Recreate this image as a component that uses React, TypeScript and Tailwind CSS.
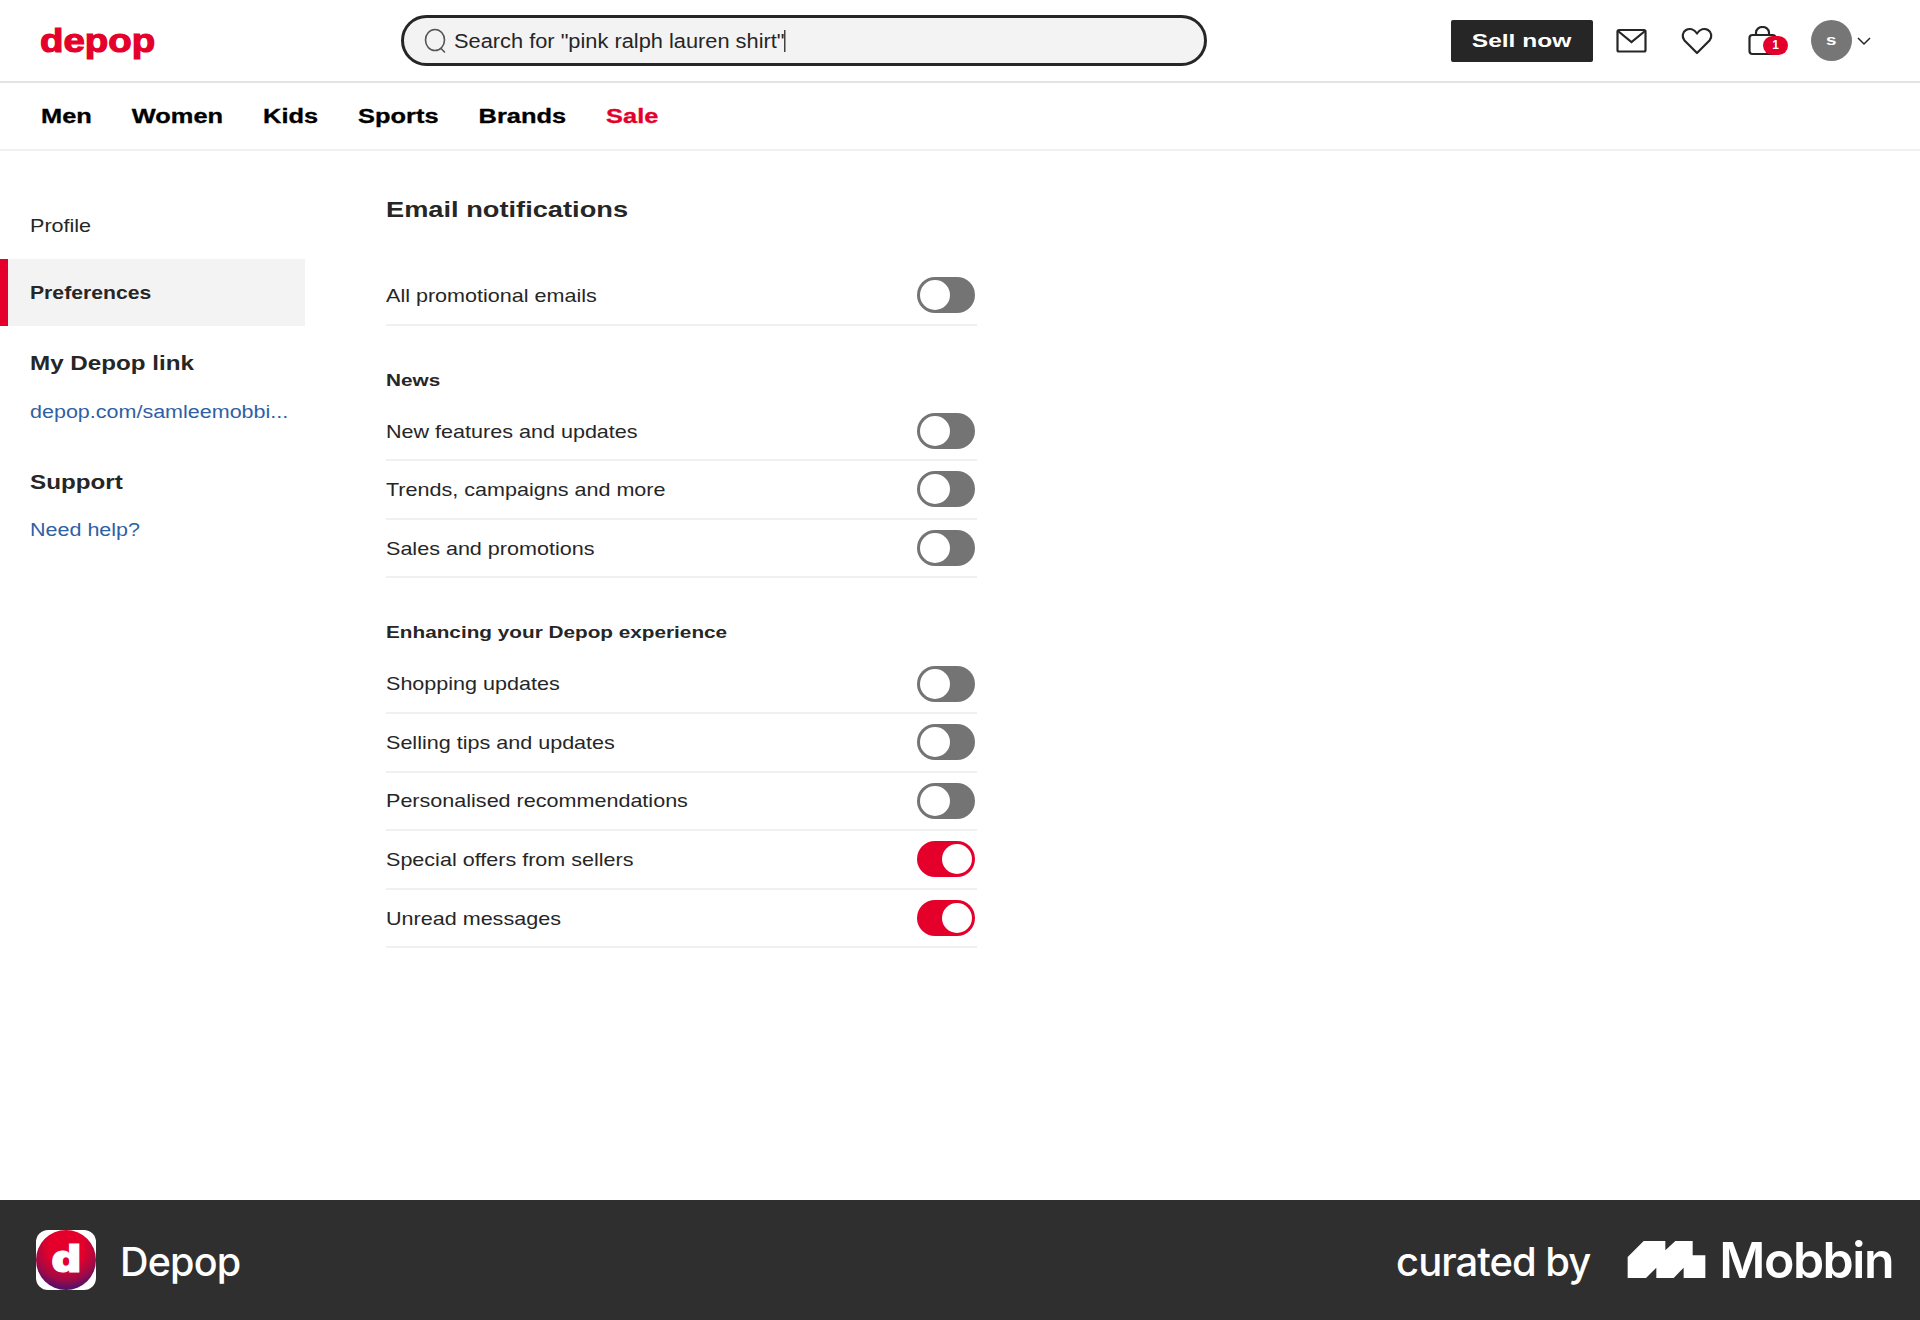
import type { ReactNode } from "react";

const sans = "font-['Liberation_Sans',Arial,sans-serif]";

const news = ["New features and updates", "Trends, campaigns and more", "Sales and promotions"];
const experience = [
  { label: "Shopping updates", on: false },
  { label: "Selling tips and updates", on: false },
  { label: "Personalised recommendations", on: false },
  { label: "Special offers from sellers", on: true },
  { label: "Unread messages", on: true },
];
const navItems = ["Men", "Women", "Kids", "Sports", "Brands"];

// the real page uses an extended grotesque, so stretch Liberation sideways
function Wide({ children, className = "" }: { children: ReactNode; className?: string }) {
  return <span className={`inline-block origin-left whitespace-nowrap ${className}`}>{children}</span>;
}

function Toggle({ on }: { on: boolean }) {
  return (
    <span
      className={`flex h-[36px] w-[58px] items-center rounded-full p-[3px] ${on ? "justify-end bg-[#e4002b]" : "justify-start bg-[#747474]"}`}
    >
      <span className="h-[30px] w-[30px] rounded-full bg-white" />
    </span>
  );
}

function Row({ label, on = false }: { label: string; on?: boolean }) {
  return (
    <div className="flex h-[58.6px] items-center justify-between border-b-2 border-[#f0f0f0] pr-[2px]">
      <Wide className="scale-x-[1.165] pt-px text-[18.5px] text-[#262626]">{label}</Wide>
      <Toggle on={on} />
    </div>
  );
}

function Header() {
  return (
    <header className="flex h-[83px] items-center border-b-2 border-[#e3e3e3] pl-[40px]">
      <span className="w-[361px]">
        <Wide className="scale-x-[1.13] text-[34px] leading-none font-bold text-[#e4002b] [-webkit-text-stroke:1.2px_#e4002b]">
          depop
        </Wide>
      </span>
      <div className="flex h-[51px] w-[806px] items-center rounded-[26px] border-[3px] border-[#262626] bg-[#f3f3f3] pl-[19px]">
        <svg className="h-[26px] w-[26px] text-[#555]" viewBox="0 0 26 26" fill="none" stroke="currentColor" strokeWidth="1.6">
          <ellipse cx="12" cy="12" rx="9.5" ry="10.5" />
          <path d="M18 20.5l3.5 3.5" strokeLinecap="round" />
        </svg>
        <Wide className="ml-[5px] scale-x-[1.09] border-r border-black text-[20px] leading-[22px] text-[#262626]">
          Search for "pink ralph lauren shirt"
        </Wide>
      </div>
      <button className="ml-[244px] flex h-[42px] w-[142px] items-center justify-center rounded-[2px] bg-[#262626] pt-px text-[19px] font-bold text-white">
        <span className="inline-block scale-x-[1.29] whitespace-nowrap">Sell now</span>
      </button>
      <svg className="ml-[23px] h-[26px] w-[32px] text-[#262626]" viewBox="0 0 32 26" fill="none" stroke="currentColor" strokeWidth="2.2">
        <rect x="1.5" y="2" width="28" height="21.5" rx="1.5" />
        <path d="M2 3l13.5 11L29 3" />
      </svg>
      <svg className="ml-[33px] h-[28px] w-[32px] text-[#262626]" viewBox="0 0 32 28" fill="none" stroke="currentColor" strokeWidth="2.2" strokeLinejoin="round">
        <path d="M16 26L3.5 13.5C0.5 10 1.5 5 5 3c3.5-2 8-1 11 3.500C19 2 23.500 1 27 3c3.500 2 4.500 7 1.500 10.500L16 26z" />
      </svg>
      <span className="relative ml-[35px] block h-[30px] w-[40px]">
        <svg className="h-[30px] w-[40px] text-[#262626]" viewBox="0 0 40 30" fill="none" stroke="currentColor" strokeWidth="2.2">
          <rect x="1.500" y="9" width="26" height="19" rx="3" />
          <path d="M8 9V6.500a6.500 5.500 0 0113 0V9" />
        </svg>
        <span className="absolute top-[10px] left-[15px] flex h-[19px] w-[25px] items-center justify-center rounded-full bg-[#e4002b] text-[12px] font-bold text-white">
          1
        </span>
      </span>
      <span className="ml-[23px] flex h-[41px] w-[41px] items-center justify-center rounded-full bg-[#767676] text-[15px] font-bold text-white">
        <span className="inline-block scale-x-[1.25]">s</span>
      </span>
      <svg className="ml-[5px] h-[10px] w-[14px] text-[#262626]" viewBox="0 0 14 10" fill="none" stroke="currentColor" strokeWidth="1.5">
        <path d="M1 2l6 6 6-6" />
      </svg>
    </header>
  );
}

function Nav() {
  return (
    <nav className="flex h-[68px] items-center border-b-2 border-[#f0f0f0] pl-[41px]">
      <div className="flex origin-left scale-x-[1.27] items-center gap-[31.5px] text-[20px] font-bold text-black [-webkit-text-stroke:0.3px_currentColor]">
        {navItems.map((item) => (
          <a key={item}>{item}</a>
        ))}
        <a className="text-[#e4002b]">Sale</a>
      </div>
    </nav>
  );
}

function Sidebar() {
  return (
    <aside className="w-[305px] shrink-0 pt-[41px] text-[#262626]">
      <div className="flex h-[67px] items-center pl-[30px]">
        <Wide className="scale-x-[1.165] pt-px text-[18.5px]">Profile</Wide>
      </div>
      <div className="flex h-[67px] items-center border-l-[8px] border-[#e4002b] bg-[#f3f3f3] pl-[22px]">
        <Wide className="scale-x-[1.21] pt-[2px] text-[17.5px] font-bold">Preferences</Wide>
      </div>
      <h3 className="mt-[24px] pl-[30px] text-[20px] leading-[26px] font-bold">
        <Wide className="scale-x-[1.21]">My Depop link</Wide>
      </h3>
      <a className="mt-[24px] block pl-[30px] text-[18px] leading-[24px] text-[#2f5fa5]">
        <Wide className="scale-x-[1.195]">depop.com/samleemobbi...</Wide>
      </a>
      <h3 className="mt-[45px] pl-[30px] text-[20px] leading-[26px] font-bold">
        <Wide className="scale-x-[1.21]">Support</Wide>
      </h3>
      <a className="mt-[23px] block pl-[30px] text-[18px] leading-[24px] text-[#2f5fa5]">
        <Wide className="scale-x-[1.195]">Need help?</Wide>
      </a>
    </aside>
  );
}

function Settings() {
  return (
    <section className="ml-[81px] w-[591px] pt-[41px]">
      <h1 className="text-[22.5px] leading-[36px] font-bold text-[#262626]">
        <Wide className="scale-x-[1.21]">Email notifications</Wide>
      </h1>
      <div className="mt-[39px]">
        <Row label="All promotional emails" />
      </div>
      <h2 className="mt-[43px] text-[17px] leading-[24px] font-bold text-[#262626]">
        <Wide className="scale-x-[1.22]">News</Wide>
      </h2>
      <div className="mt-[10px]">
        {news.map((label) => (
          <Row key={label} label={label} />
        ))}
      </div>
      <h2 className="mt-[43px] text-[17px] leading-[24px] font-bold text-[#262626]">
        <Wide className="scale-x-[1.22]">Enhancing your Depop experience</Wide>
      </h2>
      <div className="mt-[10px]">
        {experience.map((item) => (
          <Row key={item.label} label={item.label} on={item.on} />
        ))}
      </div>
    </section>
  );
}

function Footer() {
  return (
    <footer className="flex h-[120px] items-center justify-between bg-[#2f2f2f] pr-[27px] pl-[36px] font-['Inter',sans-serif] text-white">
      <div className="flex items-center">
        <span className="flex h-[60px] w-[60px] items-center justify-center rounded-[12px] bg-white">
          <span className="flex h-[60px] w-[60px] items-center justify-center rounded-full bg-[radial-gradient(circle_at_50%_30%,#e4002b_35%,#a00a45_62%,#4a1070_82%)] text-[38px] leading-none font-black text-white">
            <span className="-mt-[5px] inline-block scale-x-[1.2] [-webkit-text-stroke:1px_white]">d</span>
          </span>
        </span>
        <span className="ml-[24px] pt-[5px] text-[39.5px] leading-none font-medium tracking-[-0.8px]">Depop</span>
      </div>
      <div className="flex items-center">
        <span className="pt-[3px] text-[40px] leading-none font-medium tracking-[-1px]">curated by</span>
        <svg className="ml-[37px] -mt-[2px] h-[37px] w-[79px] fill-white" viewBox="0 0 233 111">
          <polygon points="0,48 48,0 113,0 113,28 143,0 195,0 195,43 233,43 233,111 168,111 168,80 138,111 86,111 86,80 55,111 0,111" />
        </svg>
        <span className="ml-[13px] -mt-[1px] text-[50px] leading-none font-semibold tracking-[-1.500px]">Mobbin</span>
      </div>
    </footer>
  );
}

export default function App() {
  return (
    <div className={`flex h-[1320px] w-[1920px] flex-col overflow-hidden bg-white ${sans}`}>
      <Header />
      <Nav />
      <main className="flex flex-1">
        <Sidebar />
        <Settings />
      </main>
      <Footer />
    </div>
  );
}
